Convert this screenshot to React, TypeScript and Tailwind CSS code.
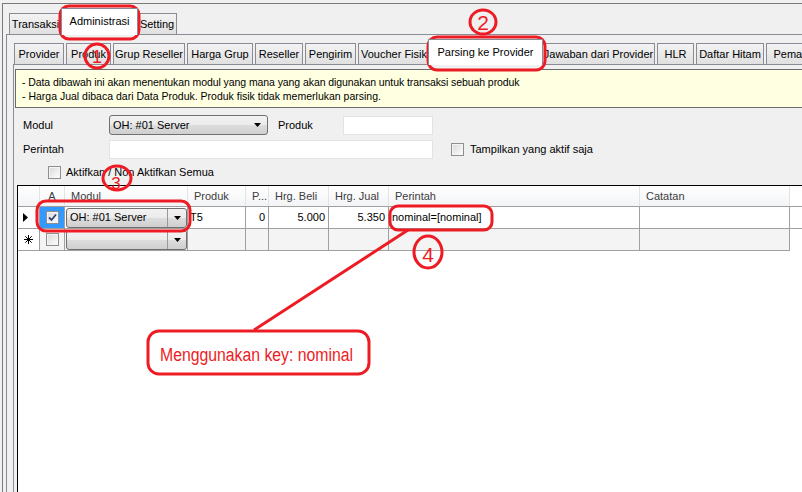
import React from "react";

type TabDef = { label: string; cls: string; active?: boolean };

const outerTabs: TabDef[] = [
  { label: "Transaksi", cls: "w-[53px]" },
  { label: "Administrasi", cls: "w-[77px] -ml-[1px]", active: true },
  { label: "Setting", cls: "w-[40px] -ml-[1px]" },
];

const innerTabs: TabDef[] = [
  { label: "Provider", cls: "w-[50px]" },
  { label: "Produk", cls: "w-[45px] ml-[2px]" },
  { label: "Grup Reseller", cls: "w-[72px] ml-[2px]" },
  { label: "Harga Grup", cls: "w-[66px] ml-[2px]" },
  { label: "Reseller", cls: "w-[48px] ml-[2px]" },
  { label: "Pengirim", cls: "w-[51px] ml-[2px]" },
  { label: "Voucher Fisik", cls: "w-[72px] ml-[2px]" },
  { label: "Parsing ke Provider", cls: "w-[115px] -ml-[2px]", active: true },
  { label: "Jawaban dari Provider", cls: "w-[113px] -ml-[1px]" },
  { label: "HLR", cls: "w-[37px] ml-[2px]" },
  { label: "Daftar Hitam", cls: "w-[68px] ml-[2px]" },
  { label: "Pemakaian", cls: "w-[70px] ml-[2px]" },
];

const btnGradient =
  "bg-[linear-gradient(#f2f2f2_0%,#ebebeb_50%,#dddddd_50%,#cfcfcf_100%)]";

function Tab({ tab, activeH }: { tab: TabDef; activeH: string }) {
  if (tab.active) {
    return (
      <div
        className={`relative z-10 -mb-px flex shrink-0 justify-center overflow-hidden whitespace-nowrap border border-b-0 border-[#898c95] bg-white pt-[4px] ${activeH} ${tab.cls}`}
      >
        {tab.label}
      </div>
    );
  }
  return (
    <div
      className={`flex h-[21px] shrink-0 items-center justify-center overflow-hidden whitespace-nowrap border border-b-0 border-[#898c95] bg-[linear-gradient(#f3f3f3,#e0e0e0)] ${tab.cls}`}
    >
      {tab.label}
    </div>
  );
}

function Arrow() {
  return (
    <svg width="7" height="4" viewBox="0 0 7 4">
      <polygon points="0,0 7,0 3.5,4" fill="#000" />
    </svg>
  );
}

function CheckBox({ checked }: { checked?: boolean }) {
  return (
    <div className="flex h-[13px] w-[13px] shrink-0 items-center justify-center border border-[#8e8f8f] bg-white">
      <div className="flex h-[11px] w-[11px] items-center justify-center border border-[#f4f4f4] bg-[linear-gradient(135deg,#dcdcdc,#fbfbfb)]">
        {checked ? (
          <svg width="9" height="9" viewBox="0 0 9 9">
            <path d="M1 4.5 L3.5 7 L8 1.5" stroke="#2e3f75" strokeWidth="1.8" fill="none" />
          </svg>
        ) : null}
      </div>
    </div>
  );
}

function GridCombo({ text }: { text: string }) {
  return (
    <div
      className={`ml-[1px] flex h-[20px] w-[121px] items-center rounded-[3px] border border-[#707070] ${btnGradient}`}
    >
      <span className="flex-1 pl-[3px]">{text}</span>
      <span className="flex h-full w-[19px] items-center justify-center border-l border-[#9a9a9a]">
        <Arrow />
      </span>
    </div>
  );
}

const cols = [
  "w-[22px]",
  "w-[25px]",
  "w-[123px]",
  "w-[58px]",
  "w-[23px]",
  "w-[60px]",
  "w-[60px]",
  "w-[251px]",
  "w-[150px]",
];

const headers = ["", "A", "Modul", "Produk", "P...", "Hrg. Beli", "Hrg. Jual", "Perintah", "Catatan"];

function Annotations() {
  return (
    <svg
      className="pointer-events-none absolute left-0 top-0"
      width="802"
      height="492"
      viewBox="0 0 802 492"
      fill="none"
      stroke="#ed1c24"
      strokeWidth="3"
    >
      <rect x="60" y="6" width="79" height="33" rx="9" />
      <rect x="428" y="37" width="117" height="33" rx="9" />
      <rect x="37" y="201" width="153" height="30" rx="9" />
      <rect x="390" y="206" width="102" height="24" rx="8" />
      <rect x="148" y="331" width="221" height="43" rx="11" />
      <line x1="408" y1="230" x2="254" y2="330" />
      <ellipse cx="97" cy="56" rx="12" ry="12" />
      <ellipse cx="483" cy="22" rx="13" ry="12" />
      <ellipse cx="117" cy="178" rx="14" ry="12" />
      <ellipse cx="428" cy="252" rx="14" ry="16" />
      <g fill="#ed1c24" stroke="none" fontFamily="'Liberation Sans', Arial, sans-serif" textAnchor="middle">
        <text x="97" y="63" fontSize="18">1</text>
        <text x="483" y="30" fontSize="21">2</text>
        <text x="116" y="189" fontSize="17">3</text>
        <text x="428" y="262" fontSize="21">4</text>
        <text x="160" y="361" fontSize="18" textAnchor="start" textLength="193" lengthAdjust="spacingAndGlyphs">
          Menggunakan key: nominal
        </text>
      </g>
    </svg>
  );
}

export default function App() {
  return (
    <div className="relative h-[492px] w-[802px] overflow-hidden bg-[#f0f0f0] pl-[2px] pt-[3px] font-['Liberation_Sans',Arial,sans-serif] text-[11px] text-black">
      <div className="flex h-full flex-col border-l border-t border-[#7a7a7a]">
        {/* outer tabs */}
        <div className="flex h-[30px] items-end pl-[6px]">
          {outerTabs.map((t) => (
            <Tab key={t.label} tab={t} activeH="h-[27px]" />
          ))}
        </div>
        <div className="ml-[3px] flex flex-1 flex-col border-l border-t border-[#898c95]">
          {/* inner tabs */}
          <div className="flex h-[29px] items-end pl-[7px]">
            {innerTabs.map((t) => (
              <Tab key={t.label} tab={t} activeH="h-[26px]" />
            ))}
          </div>
          <div className="ml-[6px] flex flex-1 flex-col border-l border-t border-[#898c95]">
            <div className="ml-[1px] mt-[4px] h-[39px] whitespace-nowrap border-b border-l border-t border-[#6b6b6b] bg-[#ffffe1] pl-[6px] pt-[5px] text-[10.5px] leading-[14px]">
              <div className="tracking-[-0.08px]">- Data dibawah ini akan menentukan modul yang mana yang akan digunakan untuk transaksi sebuah produk</div>
              <div>- Harga Jual dibaca dari Data Produk. Produk fisik tidak memerlukan parsing.</div>
            </div>

            {/* Modul row */}
            <div className="mt-[7px] flex h-[20px] items-center pl-[9px]">
              <span className="w-[86px]">Modul</span>
              <div
                className={`flex h-[20px] w-[159px] items-center justify-between rounded-[3px] border border-[#707070] pl-[3px] pr-[6px] ${btnGradient}`}
              >
                <span>OH: #01 Server</span>
                <Arrow />
              </div>
              <span className="ml-[10px] w-[65px]">Produk</span>
              <div className="h-[19px] w-[90px] border border-[#e3e3e3] bg-white" />
            </div>

            {/* Perintah row */}
            <div className="mt-[5px] flex h-[19px] items-center pl-[9px]">
              <span className="w-[86px]">Perintah</span>
              <div className="h-[19px] w-[324px] border border-[#e3e3e3] bg-white" />
              <div className="ml-[18px]">
                <CheckBox />
              </div>
              <span className="ml-[6px]">Tampilkan yang aktif saja</span>
            </div>

            {/* Aktifkan row */}
            <div className="mt-[7px] flex h-[13px] items-center pl-[34px]">
              <CheckBox />
              <span className="ml-[5px]">Aktifkan / Non Aktifkan Semua</span>
            </div>

            {/* grid */}
            <div className="ml-[3px] mt-[6px] flex flex-1 flex-col border-l border-t border-black bg-white">
              <div className="flex h-[21px] border-b border-[#a0a0a0]">
                {headers.map((h, i) => (
                  <div
                    key={i}
                    className={`flex shrink-0 items-center border-r border-[#e3e3e3] bg-[linear-gradient(#ffffff,#f3f4f6)] text-[#3c3c3c] ${cols[i]} ${i === 1 ? "justify-center" : "pl-[6px]"}`}
                  >
                    {h}
                  </div>
                ))}
              </div>

              {/* row 1 */}
              <div className="flex h-[22px] border-b border-[#a0a0a0]">
                <div className={`flex shrink-0 items-center border-r border-[#a0a0a0] pl-[5px] ${cols[0]}`}>
                  <svg width="5" height="9" viewBox="0 0 5 9">
                    <polygon points="0,0 5,4.5 0,9" fill="#000" />
                  </svg>
                </div>
                <div className={`flex shrink-0 items-center justify-center border-r border-[#a0a0a0] bg-[#3399ff] ${cols[1]}`}>
                  <CheckBox checked />
                </div>
                <div className={`flex shrink-0 items-center border-r border-[#a0a0a0] ${cols[2]}`}>
                  <GridCombo text="OH: #01 Server" />
                </div>
                <div className={`flex shrink-0 items-center border-r border-[#a0a0a0] pl-[2px] ${cols[3]}`}>T5</div>
                <div className={`flex shrink-0 items-center justify-end border-r border-[#a0a0a0] pr-[3px] ${cols[4]}`}>0</div>
                <div className={`flex shrink-0 items-center justify-end border-r border-[#a0a0a0] pr-[3px] ${cols[5]}`}>5.000</div>
                <div className={`flex shrink-0 items-center justify-end border-r border-[#a0a0a0] pr-[3px] ${cols[6]}`}>5.350</div>
                <div className={`flex shrink-0 items-center border-r border-[#a0a0a0] pl-[3px] ${cols[7]}`}>nominal=[nominal]</div>
                <div className={`flex shrink-0 items-center border-r border-[#a0a0a0] ${cols[8]}`} />
              </div>

              {/* row 2 (new row) */}
              <div className="flex h-[22px]">
                <div className={`flex shrink-0 items-center justify-center border-b border-r border-[#a0a0a0] ${cols[0]}`}>
                  <svg width="9" height="9" viewBox="0 0 9 9" stroke="#000" strokeWidth="1">
                    <line x1="4.5" y1="0" x2="4.5" y2="9" />
                    <line x1="0" y1="4.5" x2="9" y2="4.5" />
                    <line x1="1.3" y1="1.3" x2="7.7" y2="7.7" />
                    <line x1="7.7" y1="1.3" x2="1.3" y2="7.7" />
                  </svg>
                </div>
                <div className={`flex shrink-0 items-center justify-center border-b border-r border-[#a0a0a0] bg-[#f4f4f4] ${cols[1]}`}>
                  <CheckBox />
                </div>
                <div className={`flex shrink-0 items-center border-b border-r border-[#a0a0a0] bg-[#f4f4f4] ${cols[2]}`}>
                  <GridCombo text="" />
                </div>
                {cols.slice(3).map((c, i) => (
                  <div key={i} className={`shrink-0 border-b border-r border-[#a0a0a0] bg-[#f4f4f4] ${c}`} />
                ))}
              </div>
            </div>
          </div>
        </div>
      </div>
      <Annotations />
    </div>
  );
}
